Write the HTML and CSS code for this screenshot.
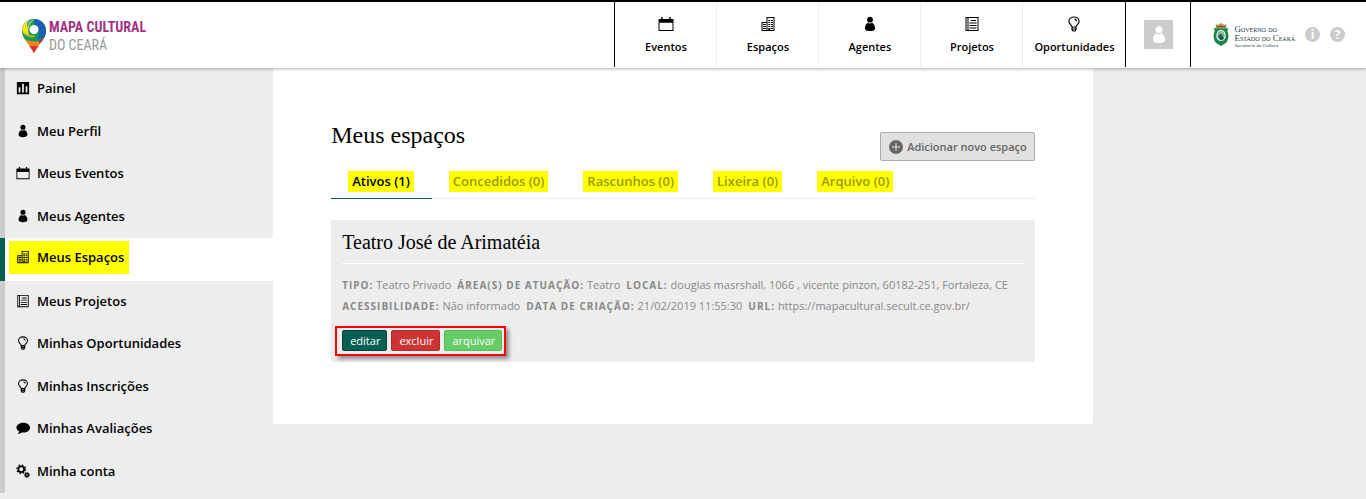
FILE: index.html
```html
<!DOCTYPE html>
<html lang="pt-BR">
<head>
<meta charset="utf-8">
<meta name="viewport" content="width=device-width, initial-scale=1">
<title>Meus espaços - Mapa Cultural do Ceará</title>
<link rel="stylesheet" href="styles.css">
</head>
<body>
<svg class="sprite" aria-hidden="true">
  <symbol id="calendar" viewBox="0 0 16 16"><path d="M.5 3h2.200v2H5.500V3h5v2h2.800V3h2.200v12H.500zM1.500 6.500V14h13V6.500zM3.200 1h1.500v3H3.200zM11.300 1h1.500v3h-1.500z" fill-rule="evenodd"/><path d="M1 3h14v3.500H1z"/></symbol>
  <symbol id="building" viewBox="0 0 16 16"><path d="M1.500 6H6.500V1H14.500V15H1.500zM2.500 7v7h4V7zM7.500 2V14h6V2z" fill-rule="evenodd"/><path d="M3 8h3v1H3zM3 10h3v1H3zM3 12h3v1H3zM8.300 4h2v1h-2zM11 4h2v1h-2zM8.300 6h2v1h-2zM11 6h2v1h-2zM8.300 8h2v1h-2zM11 8h2v1h-2zM8.300 10h2v1h-2zM11 10h2v1h-2zM8.300 12h2v2h-2zM11 12h2v1h-2z"/></symbol>
  <symbol id="person" viewBox="0 0 16 16"><circle cx="8" cy="3.700" r="2.900"/><path d="M5.800 6.800c1.300 1 3.100 1 4.400 0 1.600 1.200 2.900 3.300 2.900 5.100 0 2.300-2 3.100-5.100 3.100s-5.100-.8-5.100-3.100c0-1.800 1.300-3.900 2.900-5.100z"/></symbol>
  <symbol id="list" viewBox="0 0 16 16"><path d="M1.500 1h13v14h-13zM2.500 2v12h1V2zM4.500 2v12h9V2z" fill-rule="evenodd"/><path d="M7 4h5v1H7zM5.500 6.500h7v1h-7zM5.500 9h7v1h-7zM5.500 11.500h7v1h-7z"/></symbol>
  <symbol id="bulb" viewBox="0 0 16 16"><path d="M6 11c0-2-3.100-2.900-3.100-5.600C2.900 2.800 5.200 1 8 1s5.100 1.800 5.100 4.400C13.100 8.100 10 9 10 11zM6 11v2.500l1 1.500h2l1-1.500V11M6 13h4M8.500 3.200c1.200.2 2 1 2.100 2" fill="none" stroke="currentColor" stroke-width="1.200"/></symbol>
  <symbol id="chart" viewBox="0 0 16 16"><path d="M1 1h14v14H1zM3 7v6h2V7zM7 3v10h2V3zM11 6v7h2V6z" fill-rule="evenodd"/></symbol>
  <symbol id="bubble" viewBox="0 0 16 16"><path d="M8.500 2C12.600 2 16 4.500 16 7.600s-3.400 5.600-7.500 5.600c-.7 0-1.400 0-2-.2C5.300 14 3.700 14.500 2 14.500c1-.7 1.600-1.600 1.600-2.700C1.600 10.800.5 9.300.5 7.600.5 4.500 4.100 2 8.500 2z"/></symbol>
  <symbol id="gears" viewBox="0 0 16 16"><g fill="none" stroke="currentColor"><circle cx="6" cy="6" r="3.300" stroke-width="2"/><circle cx="6" cy="6" r="4.800" stroke-width="1.600" stroke-dasharray="1.900 1.870"/><circle cx="12.500" cy="12.500" r="1.700" stroke-width="1.600"/><circle cx="12.500" cy="12.500" r="2.900" stroke-width="1.100" stroke-dasharray="1.200 1.077"/></g></symbol>
</svg>

<header class="topbar">
  <a class="logo" href="#" aria-label="Mapa Cultural do Ceará">
    <svg class="logo-pin" viewBox="0 0 24 34" aria-hidden="true">
      <clipPath id="pin"><path d="M12 0C5 0 0 5 0 12c0 7 7 13 12 22 5-9 12-15 12-22C24 5 19 0 12 0z"/></clipPath>
      <g clip-path="url(#pin)">
        <path d="M0 0h24v34H0z" fill="#e9861f"/>
        <path d="M0 27h24v7H0z" fill="#df3329"/>
        <path d="M0 0h24v20c-6 4-17 3-24-1z" fill="#179b57"/>
        <path d="M12 0h12v16c-3 3-6 4-9 4 4-5 2-12-3-13z" fill="#1761b0"/>
        <path d="M17 21c4-1 7-4 7-8v10l-7 1z" fill="#933581"/>
        <path d="M0 0h13C7 4 5 10 7 16c-3 1-6-1-7-5z" fill="#f4e51c"/>
        <path d="M1 9c1 6 6 9 12 7l-1 2C7 19 2 17 1 9z" fill="#d3bd1d"/>
        <path d="M6 9c0-6 5-9 10-9L9 0C5 2 4 6 6 9z" fill="#229bd0"/>
      </g>
      <circle cx="12" cy="10.500" r="4.500" fill="#fff"/>
    </svg>
    <span class="logo-text"><span class="logo-name">MAPA CULTURAL</span><span class="logo-place">DO CEARÁ</span></span>
  </a>
  <nav class="topnav" aria-label="Principal">
    <a href="#"><svg class="icon"><use href="#calendar"/></svg>Eventos</a>
    <a href="#"><svg class="icon"><use href="#building"/></svg>Espaços</a>
    <a href="#"><svg class="icon"><use href="#person"/></svg>Agentes</a>
    <a href="#"><svg class="icon"><use href="#list"/></svg>Projetos</a>
    <a href="#"><svg class="icon"><use href="#bulb"/></svg>Oportunidades</a>
  </nav>
  <a class="account" href="#" aria-label="Minha conta"><span class="avatar"><svg viewBox="0 0 16 24"><circle cx="8" cy="6" r="4"/><path d="M5 10c2 1.500 4 1.500 6 0 2.500 1.500 4 4.500 4 7 0 3-3 4-7 4s-7-1-7-4c0-2.500 1.500-5.500 4-7z"/></svg></span></a>
  <div class="brand">
    <a class="gov" href="#">
      <svg class="crest" viewBox="0 0 16 22" aria-hidden="true"><path d="M3 1l2 1 3-2 3 2 2-1v4H3z" fill="#b98d55"/><path d="M4 3h8v1H4z" fill="#7a5428"/><path d="M1 5h14l-1 3c2 4 1 8-1 11l-5 3-5-3C1 16 0 12 2 8z" fill="#188548"/><ellipse cx="8" cy="12" rx="4.500" ry="5.500" fill="#fff"/><ellipse cx="8" cy="12" rx="3.500" ry="4.500" fill="#73b6a0"/><path d="M5 13l3-3 3 5-3 2z" fill="#245e51"/><path d="M8 8l2 1-2 1z" fill="#e4c548"/></svg>
      <span class="gov-text"><span class="gov-line">Governo <small>do</small></span><span class="gov-line">Estado <small>do</small> Ceará</span><span class="gov-sub">Secretaria da Cultura</span></span>
    </a>
    <a class="round" href="#" aria-label="Informações">i</a>
    <a class="round" href="#" aria-label="Ajuda">?</a>
  </div>
</header>

<div class="page">
  <nav class="sidebar" aria-label="Painel">
    <a href="#"><svg class="icon"><use href="#chart"/></svg>Painel</a>
    <a href="#"><svg class="icon"><use href="#person"/></svg>Meu Perfil</a>
    <a href="#"><svg class="icon"><use href="#calendar"/></svg>Meus Eventos</a>
    <a href="#"><svg class="icon"><use href="#person"/></svg>Meus Agentes</a>
    <a class="active" href="#" aria-current="page"><span class="mark"><svg class="icon"><use href="#building"/></svg>Meus Espaços</span></a>
    <a href="#"><svg class="icon"><use href="#list"/></svg>Meus Projetos</a>
    <a href="#"><svg class="icon"><use href="#bulb"/></svg>Minhas Oportunidades</a>
    <a href="#"><svg class="icon"><use href="#bulb"/></svg>Minhas Inscrições</a>
    <a href="#"><svg class="icon"><use href="#bubble"/></svg>Minhas Avaliações</a>
    <a href="#"><svg class="icon"><use href="#gears"/></svg>Minha conta</a>
  </nav>

  <main class="content">
    <div class="heading">
      <h1>Meus espaços</h1>
      <a class="add" href="#"><svg class="plus" viewBox="0 0 14 14" aria-hidden="true"><circle cx="7" cy="7" r="7" fill="#666"/><path d="M3 7h8M7 3v8" stroke="#e1e1e1"/></svg>Adicionar novo espaço</a>
    </div>
    <nav class="tabs" aria-label="Situação">
      <a class="current" href="#"><span>Ativos (1)</span></a>
      <a href="#"><span>Concedidos (0)</span></a>
      <a href="#"><span>Rascunhos (0)</span></a>
      <a href="#"><span>Lixeira (0)</span></a>
      <a href="#"><span>Arquivo (0)</span></a>
    </nav>
    <article class="card">
      <h2>Teatro José de Arimatéia</h2>
      <div class="meta">
        <p><span><b>TIPO:</b> Teatro Privado</span><span><b>ÁREA(S) DE ATUAÇÃO:</b> Teatro</span><span><b>LOCAL:</b> douglas masrshall, 1066 , vicente pinzon, 60182-251, Fortaleza, CE</span></p>
        <p><span><b>ACESSIBILIDADE:</b> Não informado</span><span><b>DATA DE CRIAÇÃO:</b> 21/02/2019 11:55:30</span><span><b>URL:</b> <a href="#">https://mapacultural.secult.ce.gov.br/</a></span></p>
      </div>
      <div class="actions">
        <button class="edit" type="button">editar</button>
        <button class="delete" type="button">excluir</button>
        <button class="archive" type="button">arquivar</button>
      </div>
    </article>
  </main>
</div>
</body>
</html>
```

FILE: styles.css
```css
* { box-sizing: border-box; }

body {
  margin: 0;
  background: #ededed;
  color: #000;
  font-family: "Open Sans", "Noto Sans", sans-serif;
  font-size: 13px;
}

a { color: inherit; text-decoration: none; }
h1, h2, p { margin: 0; font-weight: 400; }
.sprite { display: none; }
.icon { width: 16px; height: 16px; flex: none; fill: currentColor; }

/* Top bar */
.topbar {
  position: relative;
  display: flex;
  height: 68px;
  padding-bottom: 1px;
  border-top: 2px solid #000;
  background: #fff;
  box-shadow: 0 1px 3px rgba(0, 0, 0, .3);
}
.logo { display: flex; align-items: center; gap: 3px; margin-right: auto; padding: 2px 0 0 22px; }
.logo-pin { width: 24px; height: 34px; }
.logo-text {
  display: flex;
  flex-direction: column;
  font-family: "Roboto Condensed", "Liberation Sans Narrow", "Liberation Sans", sans-serif;
  font-size: 14px;
  line-height: 18px;
}
.logo-name { color: #a03583; font-weight: 700; }
.logo-place { color: #999; }

.topnav { display: flex; border-left: 1px solid #000; border-right: 1px solid #000; }
.topnav a {
  display: flex;
  flex-direction: column;
  align-items: center;
  gap: 7px;
  width: 102px;
  padding-top: 14px;
  border-right: 1px solid #ededed;
  font-size: 11px;
  font-weight: 600;
  line-height: 15px;
}
.topnav a:last-child { border-right: 0; }

.account { display: flex; align-items: center; padding: 0 17px 0 18px; border-right: 1px solid #000; }
.avatar { display: flex; justify-content: center; width: 29px; height: 29px; padding-top: 3px; background: #ccc; }
.avatar svg { width: 14px; height: 24px; fill: #fff; }

.brand { display: flex; align-items: center; gap: 10px; padding: 0 21px; }
.gov { display: flex; align-items: center; gap: 4px; }
.crest { width: 18px; height: 23px; }
.gov-text {
  display: flex;
  flex-direction: column;
  padding-top: 4px;
  font-family: "Liberation Serif", serif;
  color: #263c40;
  font-size: 9px;
  line-height: 8px;
  white-space: nowrap;
}
.gov-line { font-variant: small-caps; }
.gov-line small { font-size: 8px; }
.gov-sub { font-size: 5px; line-height: 6px; font-style: italic; }
.round {
  width: 15px;
  height: 15px;
  border-radius: 50%;
  background: #ccc;
  color: #fff;
  font-size: 12px;
  font-weight: 700;
  line-height: 15px;
  text-align: center;
}

/* Page columns */
.page { display: grid; grid-template-columns: 20% 60%; align-items: start; }

.sidebar { display: grid; grid-auto-rows: 1fr; min-height: 425px; }
.sidebar .icon { width: 14px; height: 14px; }
.sidebar a {
  display: flex;
  align-items: center;
  gap: 7px;
  padding: 0 11px 2px;
  border-left: 5px solid #ccc;
  font-size: 13px;
  font-weight: 600;
}
.sidebar a.active { padding: 0 4px 4px; border-color: #0a5f55; background: #fff; }
.mark { display: flex; align-items: center; gap: 7px; height: 33px; padding: 0 5px 0 7px; background: #ff0; }

/* Main panel */
.content { padding: 51px 58px 62px; border-radius: 0 0 2px 2px; background: #fff; }
.heading { display: flex; justify-content: space-between; align-items: flex-end; }
h1 { align-self: flex-start; font-family: "Liberation Serif", serif; font-size: 24px; line-height: 32px; }
.add {
  display: flex;
  align-items: center;
  gap: 4px;
  height: 29px;
  margin-top: 13px;
  padding: 0 7px 0 8px;
  border: 1px solid #aaa;
  border-radius: 2px;
  background: #e1e1e1;
  color: #666;
  font-size: 11px;
  font-weight: 600;
}
.plus { width: 14px; height: 14px; }

.tabs { display: flex; margin-bottom: 21px; border-bottom: 1px solid #ededed; }
.tabs a {
  margin-bottom: -1px;
  padding: 10px 18px 6px 17px;
  border-bottom: 1px solid transparent;
  color: #990;
  font-size: 13px;
  font-weight: 600;
  line-height: 21px;
}
.tabs span { display: block; padding: 0 4px; background: #ff0; }
.tabs a.current { border-color: #0a5f55; color: #000; }

.card { padding: 10px 11px 6px; border-radius: 2px; background: #ededed; }
h2 {
  padding-bottom: 9px;
  border-bottom: 1px solid #fff;
  font-family: "Liberation Serif", serif;
  font-size: 20px;
  line-height: 24px;
}
.meta { padding: 10px 0; color: #888; font-size: 11px; line-height: 21px; }
.meta p { display: flex; flex-wrap: wrap; column-gap: 6px; }
.meta b { font-size: 10px; line-height: 1; letter-spacing: 1px; }

.actions {
  display: flex;
  gap: 4px;
  width: max-content;
  margin-left: -7px;
  padding: 2px 2px 3px 5px;
  border: 2px solid #f00;
  box-shadow: 3px 3px 4px rgba(0, 0, 0, .4);
}
.actions button {
  height: 21px;
  padding: 0 6px 0 7px;
  border: 1px solid;
  border-radius: 2px;
  color: #fff;
  font-family: inherit;
  font-size: 11px;
  line-height: 18px;
}
.actions .edit { border-color: #063d37; background: #0a5f55; }
.actions .delete { border-color: #b52c2c; background: #c33; }
.actions .archive { border-color: #52c152; background: #6c6; }
```
